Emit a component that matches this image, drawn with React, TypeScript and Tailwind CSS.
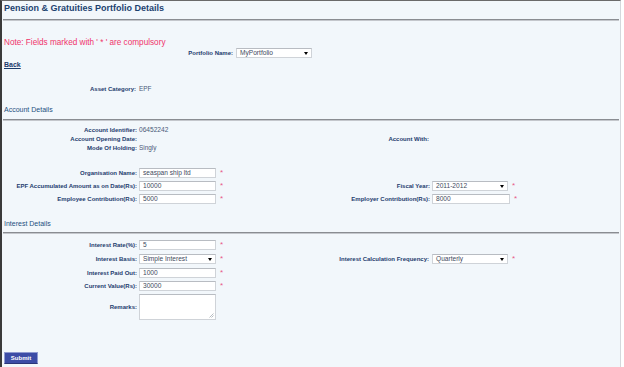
import React from "react";

const F = { fontFamily: '"Liberation Sans", Arial, sans-serif' };

function Star() {
  return <span className="ml-[4px] w-[10px] text-[8px] leading-[8px] text-[#e8588a]">*</span>;
}

function TextBox({ value, w = "w-[77px]" }: { value: string; w?: string }) {
  return (
    <div className={`${w} h-[10px] bg-white border border-[#cfd3d8] border-t-[#b8bcc2] flex items-center pl-[3px] text-[6.6px] text-[#3e4a5e]`}>
      {value}
    </div>
  );
}

function SelectBox({ value, w = "w-[76px]" }: { value: string; w?: string }) {
  return (
    <div className={`${w} h-[10px] bg-white border border-[#cfd3d8] border-t-[#b8bcc2] flex items-center justify-between pl-[3px] pr-[3px] text-[6.6px] text-[#3e4a5e]`}>
      <span>{value}</span>
      <span className="w-0 h-0 border-l-[2.5px] border-r-[2.5px] border-t-[3px] border-l-transparent border-r-transparent border-t-black mt-[1px]" />
    </div>
  );
}

function Label({ children, w = "w-[133px]" }: { children: React.ReactNode; w?: string }) {
  return <div className={`${w} text-right font-bold text-[6px] leading-[8px] text-[#1e3c6e] whitespace-nowrap`}>{children}</div>;
}

function Rule() {
  return <div className="-ml-[1px] mr-[1px] h-[2px] bg-[#8a8d92] border-b border-[#c4c7cc]" />;
}

export default function App() {
  return (
    <div className="w-[624px] h-[367px] bg-white" style={F}>
      <div className="w-[621px] h-[367px] bg-[#f2f7fb] border-l-2 border-t border-r border-l-[#3a3a3a] border-t-[#6a6a6a] border-r-[#d4d8dc] flex flex-col pl-[2px] overflow-hidden">
        {/* Title */}
        <div className="h-[18px] flex items-center pb-[2px] text-[9px] font-bold text-[#1c4270] whitespace-nowrap">
          Pension &amp; Gratuities Portfolio Details
        </div>
        <Rule />

        {/* Note */}
        <div className="mt-[17px] h-[10px] flex items-center text-[8.2px] text-[#f0336a] whitespace-nowrap">
          Note: Fields marked with ' * ' are compulsory
        </div>

        {/* Portfolio */}
        <div className="h-[10px] flex items-center">
          <Label w="w-[229px]">Portfolio Name:</Label>
          <div className="ml-[3px]">
            <SelectBox value="MyPortfolio" />
          </div>
        </div>

        {/* Back */}
        <div className="mt-[2px] h-[10px] flex items-center">
          <span className="text-[7px] font-bold underline text-[#1b3a6b]">Back</span>
        </div>

        {/* Asset Category */}
        <div className="mt-[14px] h-[10px] flex items-center">
          <Label w="w-[132px]">Asset Category:</Label>
          <span className="ml-[3px] text-[6.4px] text-[#4a5a78]">EPF</span>
        </div>

        {/* Account Details */}
        <div className="mt-[11px] h-[10px] flex items-center text-[7px] text-[#24507f] whitespace-nowrap">Account Details</div>
        <div className="mt-[4px]">
          <Rule />
        </div>

        <div className="mt-[4px] flex flex-col">
          <div className="h-[9px] flex items-center">
            <Label>Account Identifier:</Label>
            <span className="ml-[2px] text-[6.6px] text-[#4a5a78]">06452242</span>
          </div>
          <div className="h-[9px] flex items-center">
            <div className="w-[228px] flex items-center">
              <Label>Account Opening Date:</Label>
            </div>
            <Label w="w-[197px]">Account With:</Label>
          </div>
          <div className="h-[9px] flex items-center">
            <Label>Mode Of Holding:</Label>
            <span className="ml-[2px] text-[6.4px] text-[#4a5a78]">Singly</span>
          </div>
        </div>

        <div className="mt-[14px] flex flex-col">
          <div className="h-[13px] flex items-center">
            <div className="w-[228px] flex items-center">
              <Label>Organisation Name:</Label>
              <div className="ml-[2px]"><TextBox value="seaspan ship ltd" /></div>
              <Star />
            </div>
          </div>
          <div className="h-[13px] flex items-center">
            <div className="w-[228px] flex items-center">
              <Label>EPF Accumulated Amount as on Date(Rs):</Label>
              <div className="ml-[2px]"><TextBox value="10000" /></div>
              <Star />
            </div>
            <Label w="w-[198px]">Fiscal Year:</Label>
            <div className="ml-[2px]"><SelectBox value="2011-2012" /></div>
            <Star />
          </div>
          <div className="h-[14px] flex items-center">
            <div className="w-[228px] flex items-center">
              <Label>Employee Contribution(Rs):</Label>
              <div className="ml-[2px]"><TextBox value="5000" /></div>
              <Star />
            </div>
            <Label w="w-[198px]">Employer Contribution(Rs):</Label>
            <div className="ml-[2px]"><TextBox value="8000" w="w-[78px]" /></div>
            <Star />
          </div>
        </div>

        {/* Interest Details */}
        <div className="mt-[13px] h-[10px] flex items-center text-[7px] text-[#24507f] whitespace-nowrap">Interest Details</div>
        <div className="mt-[3px]">
          <Rule />
        </div>

        <div className="mt-[4px] flex flex-col">
          <div className="h-[14px] flex items-center">
            <div className="w-[228px] flex items-center">
              <Label>Interest Rate(%):</Label>
              <div className="ml-[2px]"><TextBox value="5" /></div>
              <Star />
            </div>
          </div>
          <div className="h-[14px] flex items-center">
            <div className="w-[228px] flex items-center">
              <Label>Interest Basis:</Label>
              <div className="ml-[2px]"><SelectBox value="Simple Interest" w="w-[77px]" /></div>
              <Star />
            </div>
            <Label w="w-[197px]">Interest Calculation Frequency:</Label>
            <div className="ml-[3px]"><SelectBox value="Quarterly" /></div>
            <Star />
          </div>
          <div className="h-[13px] flex items-center">
            <div className="w-[228px] flex items-center">
              <Label>Interest Paid Out:</Label>
              <div className="ml-[2px]"><TextBox value="1000" /></div>
              <Star />
            </div>
          </div>
          <div className="h-[14px] flex items-center">
            <div className="w-[228px] flex items-center">
              <Label>Current Value(Rs):</Label>
              <div className="ml-[2px]"><TextBox value="30000" /></div>
              <Star />
            </div>
          </div>
          <div className="mt-[1px] h-[26px] flex items-center">
            <Label>Remarks:</Label>
            <div className="ml-[2px] w-[77px] h-[26px] bg-white border border-[#cfd3d8] border-t-[#b8bcc2] relative">
              <svg className="absolute right-[1px] bottom-[1px]" width="5" height="5" viewBox="0 0 5 5">
                <path d="M4.5 0.5 L0.5 4.5 M4.5 2.5 L2.5 4.5" stroke="#9aa0a8" strokeWidth="0.7" />
              </svg>
            </div>
          </div>
        </div>

        {/* Submit */}
        <div className="mt-[32px]">
          <div className="w-[34px] h-[12px] bg-[#3c4ca6] border border-[#8f9ad0] border-b-[#2a3578] flex items-center justify-center text-[6px] font-bold text-white">
            Submit
          </div>
        </div>
      </div>
    </div>
  );
}
